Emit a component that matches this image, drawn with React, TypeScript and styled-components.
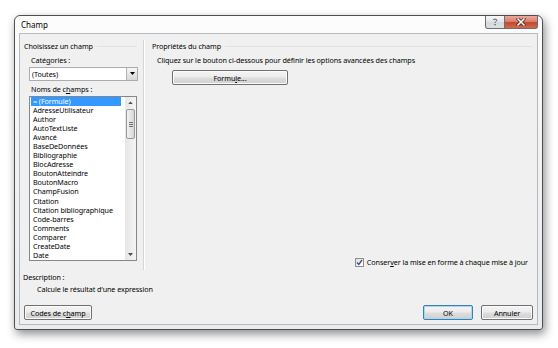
import styled, { createGlobalStyle, css } from 'styled-components';

const GlobalStyle = createGlobalStyle`
  html, body {
    margin: 0;
    padding: 0;
    background: #ffffff;
  }
  body {
    width: 558px;
    height: 348px;
    overflow: hidden;
    font-family: "Noto Sans", "Liberation Sans", sans-serif;
    font-size: 7.2px;
    letter-spacing: -0.08px;
    color: #000;
  }
`;

const Window = styled.div`
  margin: 15px 0 0 14px;
  width: 529px;
  height: 315px;
  box-sizing: border-box;
  border: 1px solid #4f4f4f;
  border-radius: 6px 6px 3px 3px;
  background: linear-gradient(180deg, #fdfdfd 0%, #f1f3f5 40%, #e9ecef 100%);
  box-shadow: 2px 4px 10px rgba(0, 0, 0, 0.45);
  display: flex;
  flex-direction: column;
  padding: 0 4px 4px 4px;
`;

const TitleBar = styled.div`
  height: 17px;
  display: flex;
  align-items: flex-start;
`;

const Title = styled.div`
  flex: 1;
  padding: 4px 0 0 2px;
  font-size: 8px;
  line-height: 10px;
  letter-spacing: 0;
`;

const CaptionButton = styled.div<{ $close?: boolean }>`
  height: 13px;
  box-sizing: border-box;
  display: flex;
  align-items: center;
  justify-content: center;
  border: 1px solid #6d6d6d;
  border-top: none;
  ${({ $close }) =>
    $close
      ? css`
          width: 33px;
          border-radius: 0 0 3px 0;
          border-left: none;
          background: linear-gradient(180deg, #e9a99b 0%, #d98170 45%, #c5462e 55%, #d06b50 100%);
        `
      : css`
          width: 20px;
          border-radius: 0 0 0 3px;
          background: linear-gradient(180deg, #f6f7f8 0%, #e3e6ea 45%, #d3d8dd 55%, #dde1e5 100%);
        `}
`;

const Client = styled.div`
  flex: 1;
  box-sizing: border-box;
  border: 1px solid #b6babe;
  background: #f0f0f0;
  display: flex;
  flex-direction: column;
  padding: 6px 0 4px 0;
`;

const Main = styled.div`
  height: 230px;
  display: flex;
`;

const LeftPanel = styled.div`
  width: 123px;
  box-sizing: border-box;
  padding: 0 6px 0 4px;
  display: flex;
  flex-direction: column;
`;

const Separator = styled.div`
  width: 1px;
  background: #d5d5d5;
  border-right: 1px solid #ffffff;
`;

const RightPanel = styled.div`
  flex: 1;
  box-sizing: border-box;
  padding: 0 4px 2px 7px;
  display: flex;
  flex-direction: column;
`;

const GroupHeader = styled.div`
  height: 12px;
  display: flex;
  align-items: center;
  gap: 4px;
  white-space: nowrap;
  line-height: 12px;
  &::after {
    content: '';
    flex: 1;
    height: 1px;
    background: #dde3e8;
  }
`;

const Label = styled.div<{ $indent?: number }>`
  height: 12px;
  line-height: 12px;
  white-space: nowrap;
  padding-left: ${({ $indent }) => $indent ?? 7}px;
`;

const Combo = styled.div`
  margin: 1px -1px 2px 5px;
  height: 14px;
  box-sizing: border-box;
  border: 1px solid #a9acb2;
  background: #fff;
  display: flex;
  align-items: center;
  padding-left: 2px;
`;

const ComboText = styled.div`
  flex: 1;
  line-height: 12px;
`;

const ComboButton = styled.div`
  width: 11px;
  height: 12px;
  box-sizing: border-box;
  border-left: 1px solid #b5b5b5;
  background: linear-gradient(180deg, #f7f7f7 0%, #e6e6e6 50%, #d8d8d8 100%);
  display: flex;
  align-items: center;
  justify-content: center;
`;

const ListBox = styled.div`
  margin: 1px 0 0 5px;
  height: 165px;
  box-sizing: border-box;
  border: 1px solid #828790;
  background: #fff;
  display: flex;
`;

const Items = styled.div`
  flex: 1;
  padding: 0 4px 0 1px;
  overflow: hidden;
`;

const Item = styled.div<{ $selected?: boolean }>`
  height: 9.06px;
  line-height: 9px;
  padding-left: 2px;
  white-space: nowrap;
  ${({ $selected }) =>
    $selected &&
    css`
      background: #3399ff;
      color: #fff;
    `}
`;

const ScrollBar = styled.div`
  width: 11px;
  background: linear-gradient(90deg, #e6e6e6, #f4f4f4);
  display: flex;
  flex-direction: column;
  align-items: center;
`;

const ScrollArrow = styled.div`
  height: 10px;
  width: 11px;
  display: flex;
  align-items: center;
  justify-content: center;
`;

const Thumb = styled.div`
  margin-top: 2px;
  width: 9px;
  height: 30px;
  box-sizing: border-box;
  border: 1px solid #9a9a9a;
  border-radius: 2px;
  background: linear-gradient(90deg, #f3f3f3 0%, #e4e4e4 50%, #d6d6d6 100%);
  display: flex;
  flex-direction: column;
  align-items: center;
  justify-content: center;
  gap: 1px;
`;

const Grip = styled.div`
  width: 4px;
  height: 1px;
  background: #6f6f6f;
`;

const ScrollFill = styled.div`
  flex: 1;
`;

const Hint = styled.div`
  height: 12px;
  line-height: 12px;
  margin: 2px 0 0 5px;
  white-space: nowrap;
`;

const Button = styled.div<{ $width: number; $default?: boolean }>`
  width: ${({ $width }) => $width}px;
  height: 15px;
  box-sizing: border-box;
  border: 1px solid ${({ $default }) => ($default ? '#3c7fb1' : '#707070')};
  border-radius: 2px;
  background: linear-gradient(180deg, #f4f4f4 0%, #ececec 48%, #dedede 52%, #d0d0d0 100%);
  box-shadow: inset 0 0 0 1px ${({ $default }) => ($default ? '#a6d8f5' : '#fbfbfb')};
  display: flex;
  align-items: center;
  justify-content: center;
  line-height: 12px;
  white-space: nowrap;
`;

const FormulaButton = styled(Button)`
  margin: 4px 0 0 20px;
`;

const CheckRow = styled.div`
  margin-top: auto;
  align-self: flex-end;
  display: flex;
  align-items: center;
  gap: 3px;
  padding-right: 5px;
  white-space: nowrap;
  line-height: 12px;
`;

const CheckBox = styled.div`
  width: 9px;
  height: 9px;
  box-sizing: border-box;
  border: 1px solid #8e8f8f;
  background: linear-gradient(135deg, #dcdcdc 0%, #f4f4f4 60%, #ffffff 100%);
  display: flex;
  align-items: center;
  justify-content: center;
`;

const Description = styled.div`
  margin-top: 1px;
  padding-left: 3px;
`;

const DescText = styled.div`
  height: 12px;
  line-height: 12px;
  padding-left: 14px;
`;

const ButtonRow = styled.div`
  margin-top: 10px;
  display: flex;
  align-items: center;
  padding: 0 4px;
  gap: 8px;
`;

const Spacer = styled.div`
  flex: 1;
`;

const fields = [
  '= (Formule)',
  'AdresseUtilisateur',
  'Author',
  'AutoTextListe',
  'Avancé',
  'BaseDeDonnées',
  'Bibliographie',
  'BlocAdresse',
  'BoutonAtteindre',
  'BoutonMacro',
  'ChampFusion',
  'Citation',
  'Citation bibliographique',
  'Code-barres',
  'Comments',
  'Comparer',
  'CreateDate',
  'Date',
];

const DownTriangle = ({ size = 5, color = '#000' }: { size?: number; color?: string }) => (
  <svg width={size} height={size / 2 + 1} viewBox="0 0 6 4">
    <path d="M0 0 L6 0 L3 3.5 Z" fill={color} />
  </svg>
);

const UpTriangle = ({ color = '#4d4d4d' }: { color?: string }) => (
  <svg width={5} height={3} viewBox="0 0 6 4">
    <path d="M0 4 L6 4 L3 0.5 Z" fill={color} />
  </svg>
);

export default function App() {
  return (
    <>
      <GlobalStyle />
      <Window>
        <TitleBar>
          <Title>Champ</Title>
          <CaptionButton>
            <svg width="6" height="8" viewBox="0 0 6 8">
              <path
                d="M1 2.2 C1 0.8 5 0.8 5 2.2 C5 3.4 3 3.4 3 4.8"
                fill="none"
                stroke="#5a5a5a"
                strokeWidth="1"
              />
              <rect x="2.4" y="6" width="1.3" height="1.3" fill="#5a5a5a" />
            </svg>
          </CaptionButton>
          <CaptionButton $close>
            <svg width="10" height="8" viewBox="0 0 10 8">
              <path d="M2 1 L8 7 M8 1 L2 7" stroke="#4a1a10" strokeWidth="3" strokeLinecap="square" />
              <path d="M2 1 L8 7 M8 1 L2 7" stroke="#ffffff" strokeWidth="1.6" strokeLinecap="square" />
            </svg>
          </CaptionButton>
        </TitleBar>
        <Client>
          <Main>
            <LeftPanel>
              <GroupHeader>Choisissez un champ</GroupHeader>
              <Label style={{ marginTop: 2 }}>
                Caté<u>g</u>ories :
              </Label>
              <Combo>
                <ComboText>(Toutes)</ComboText>
                <ComboButton>
                  <DownTriangle />
                </ComboButton>
              </Combo>
              <Label>
                Noms de c<u>h</u>amps :
              </Label>
              <ListBox>
                <Items>
                  {fields.map((f, i) => (
                    <Item key={f} $selected={i === 0}>
                      {f}
                    </Item>
                  ))}
                </Items>
                <ScrollBar>
                  <ScrollArrow>
                    <UpTriangle />
                  </ScrollArrow>
                  <Thumb>
                    <Grip />
                    <Grip />
                    <Grip />
                  </Thumb>
                  <ScrollFill />
                  <ScrollArrow>
                    <DownTriangle color="#4d4d4d" />
                  </ScrollArrow>
                </ScrollBar>
              </ListBox>
            </LeftPanel>
            <Separator />
            <RightPanel>
              <GroupHeader>Propriétés du champ</GroupHeader>
              <Hint>Cliquez sur le bouton ci-dessous pour définir les options avancées des champs</Hint>
              <FormulaButton $width={116}>
                Formu<u>l</u>e...
              </FormulaButton>
              <CheckRow>
                <CheckBox>
                  <svg width="7" height="7" viewBox="0 0 7 7">
                    <path d="M1 3.5 L2.8 5.5 L6 1" fill="none" stroke="#3f4f7f" strokeWidth="1.3" />
                  </svg>
                </CheckBox>
                <span>
                  Conser<u>v</u>er la mise en forme à chaque mise à jour
                </span>
              </CheckRow>
            </RightPanel>
          </Main>
          <Description>
            <Label $indent={0}>Description :</Label>
            <DescText>Calcule le résultat d'une expression</DescText>
          </Description>
          <ButtonRow>
            <Button $width={68}>
              Codes de c<u>h</u>amp
            </Button>
            <Spacer />
            <Button $width={50} $default>
              OK
            </Button>
            <Button $width={52}>Annuler</Button>
          </ButtonRow>
        </Client>
      </Window>
    </>
  );
}
